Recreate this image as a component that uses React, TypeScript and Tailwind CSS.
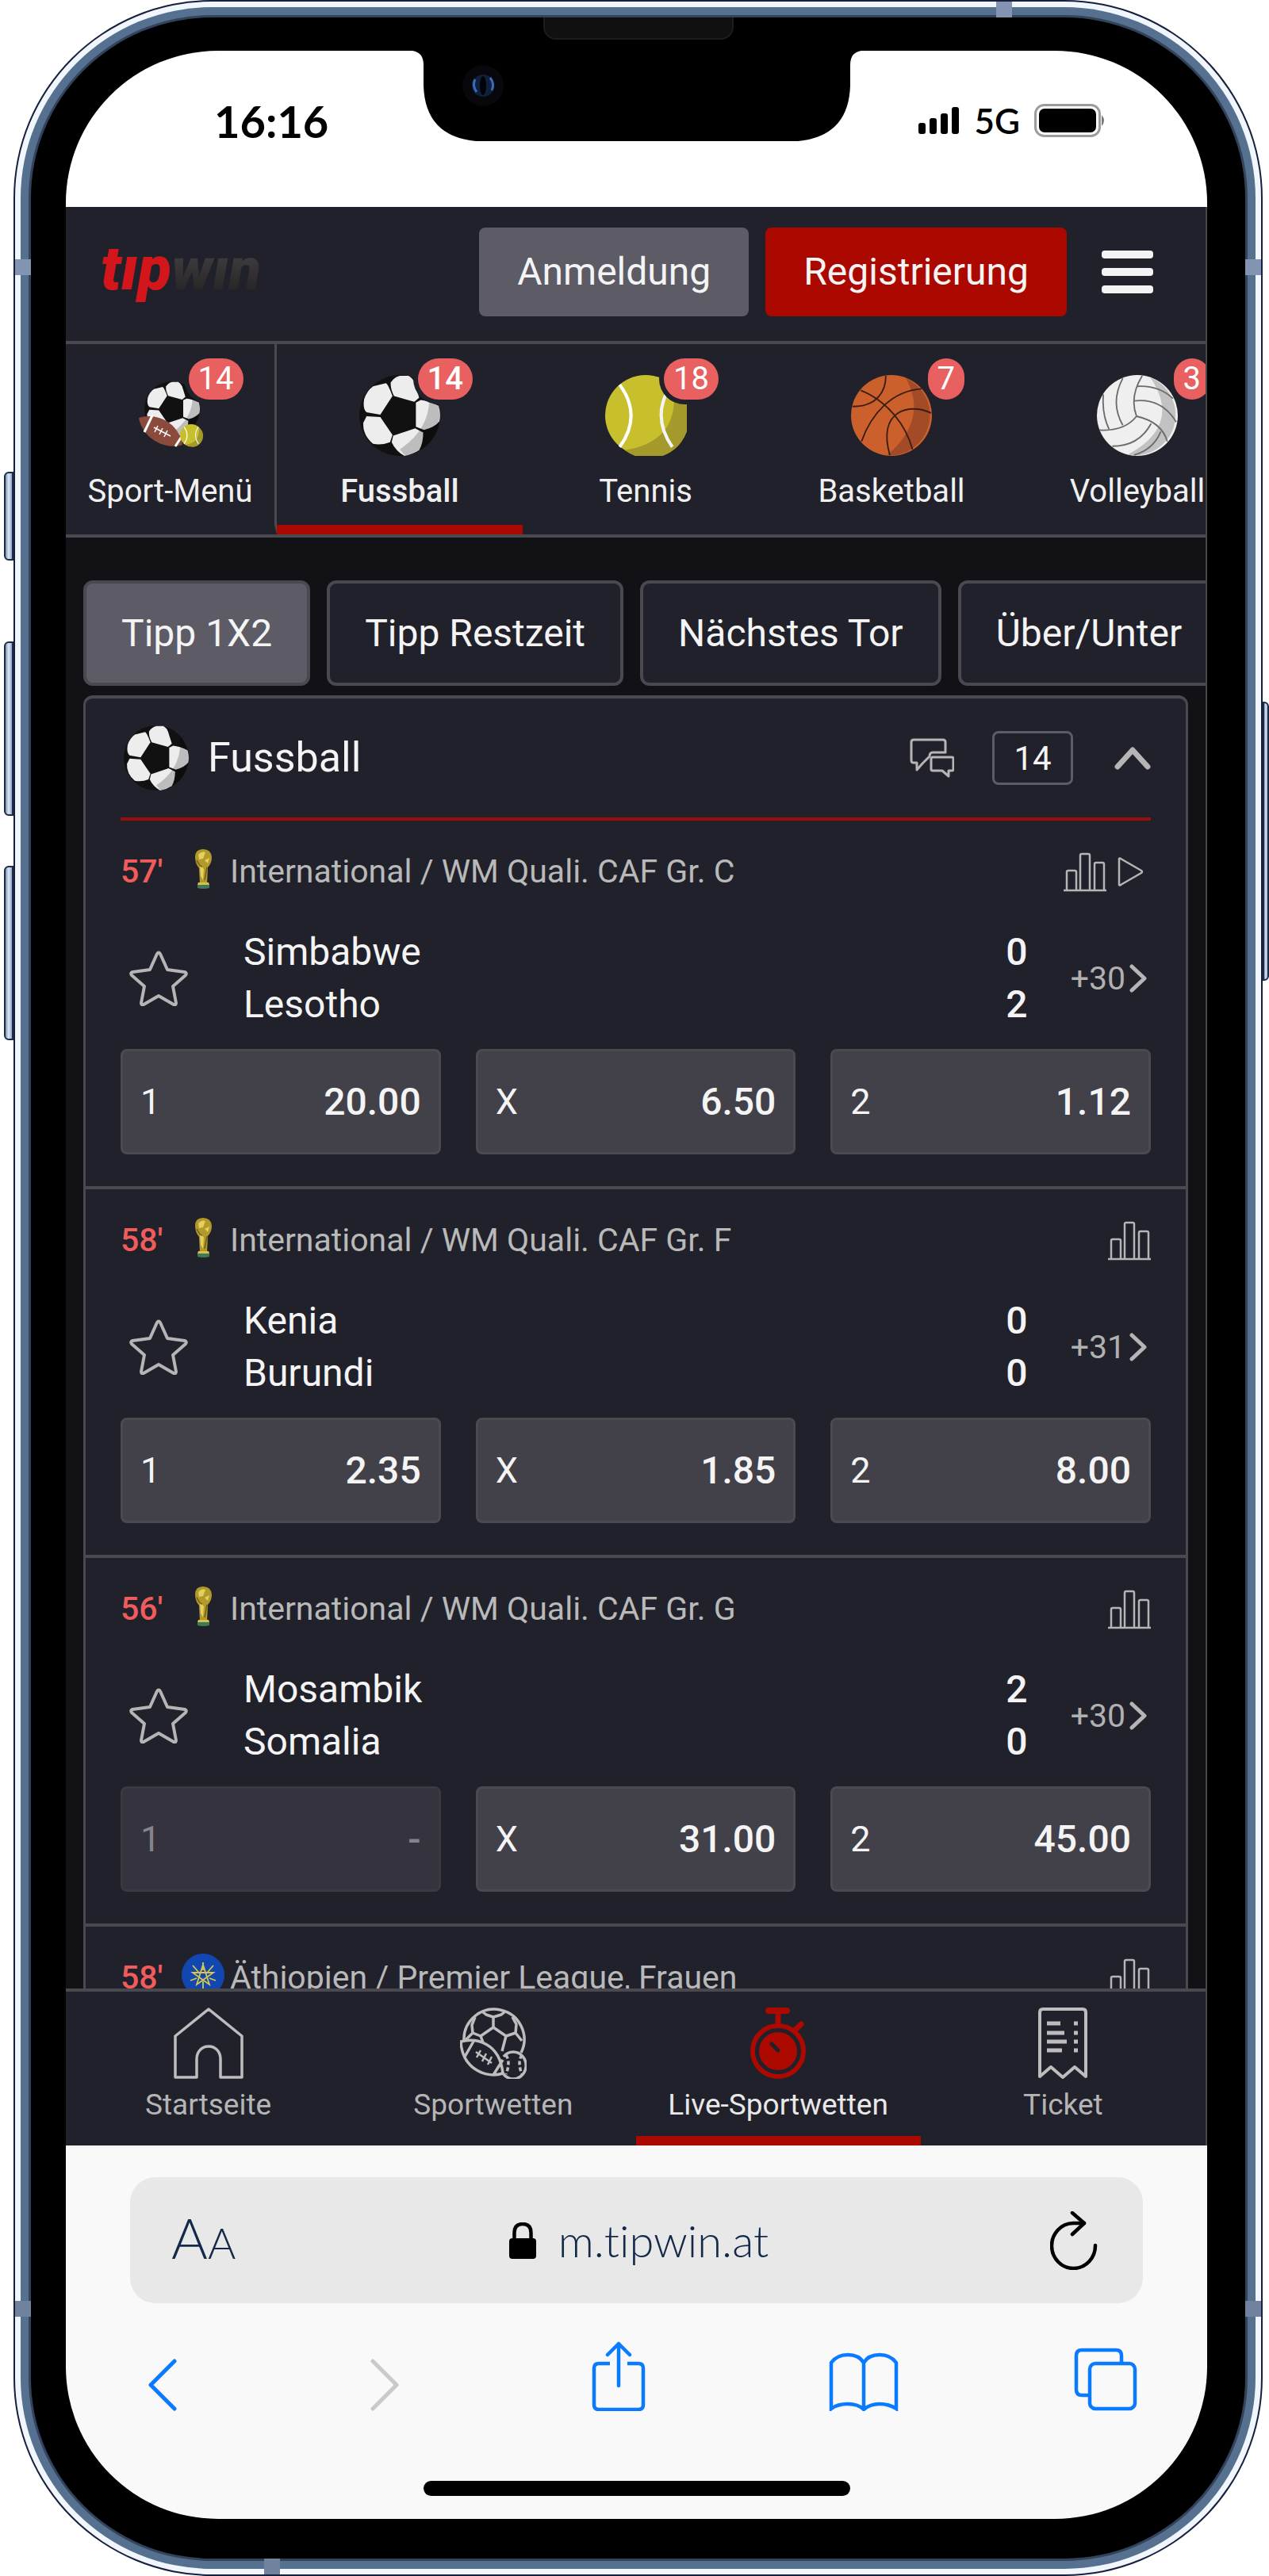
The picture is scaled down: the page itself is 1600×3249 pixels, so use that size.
import { useState, type ReactNode } from "react";
import { clsx } from "clsx";

interface IconProps {
  className?: string;
}

interface Sport {
  id: string;
  name: string;
  count: number;
  icon: (props: IconProps) => ReactNode;
}

interface Match {
  id: number;
  minute: string;
  league: string;
  badge: "cup" | "ethiopia";
  stream?: boolean;
  home: string;
  away: string;
  score: [number, number];
  more: number;
  odds: { label: string; value: string | null }[];
}

/* ---------- sport icons ---------- */

function SoccerShapes() {
  return (
    <>
      <circle cx="50" cy="50" r="50" fill="#111" />
      <g fill="#ededed">
        <path d="M6 30Q9 20 17 14L33 10Q36 12 41 26L26 49L9 46Q4 42 6 30Z" />
        <path d="M39 9Q43 3 50 1L61 1Q66 4 68 9L74 28L68 33L43 26Q38 16 39 9Z" />
        <path d="M76 31Q86 32 98 38Q101 48 99 57Q94 64 80 68L70 64V34Z" />
        <path d="M69 66L79 71Q79 84 74 93Q66 98 56 100Q45 94 40 83L42 75Z" />
        <path d="M9 51L26 52L41 74L38 83Q28 87 17 85Q4 74 5 59Z" />
      </g>
      <path d="M86 16Q92 64 50 92L57 100L74 93A50 50 0 0 0 86 16Z" fill="#000" opacity="0.2" />
    </>
  );
}

function TennisShapes() {
  return (
    <>
      <circle cx="50" cy="50" r="50" fill="#c8bf2d" />
      <path d="M84 13Q94 82 24 93A50 50 0 0 0 84 13Z" fill="#a39a2b" />
      <path d="M18 12Q46 50 18 89" fill="none" stroke="#fff" strokeWidth="4" />
      <path d="M82 12Q56 50 83 89" fill="none" stroke="#f4f4f4" strokeWidth="4" />
    </>
  );
}

function SoccerIcon({ className }: IconProps) {
  return (
    <svg viewBox="0 0 100 100" className={className} aria-hidden="true">
      <SoccerShapes />
    </svg>
  );
}

function TennisIcon({ className }: IconProps) {
  return (
    <svg viewBox="0 0 100 100" className={className} aria-hidden="true">
      <TennisShapes />
    </svg>
  );
}

function BasketballIcon({ className }: IconProps) {
  return (
    <svg viewBox="0 0 100 100" className={className} aria-hidden="true">
      <circle cx="50" cy="50" r="50" fill="#cb602d" />
      <path d="M68 4Q96 56 44 99.500A50 50 0 0 0 68 4Z" fill="#a34b26" />
      <g fill="none" stroke="#3a1d12" strokeWidth="1.800">
        <path d="M43 1C43 18 34 39 2 39" />
        <path d="M12 19C45 32 68 62 76 92" />
        <path d="M87 17C50 20 25 48 13 82" />
        <path d="M99 47C72 34 32 44 48 99" />
      </g>
    </svg>
  );
}

function VolleyballIcon({ className }: IconProps) {
  return (
    <svg viewBox="0 0 100 100" className={className} aria-hidden="true">
      <circle cx="50" cy="50" r="50" fill="#efefef" />
      <path d="M66 3Q106 62 38 98.500A50 50 0 0 0 66 3Z" fill="#c2c2c2" />
      <g fill="none" stroke="#6b6b6b" strokeWidth="1.800">
        <path d="M32 4Q16 34 32 62" />
        <path d="M56 1Q40 27 49 51Q34 70 3 68" />
        <path d="M8 24Q6 48 15 67" />
        <path d="M49 14Q76 12 94 29" />
        <path d="M46 32Q80 28 98 58" />
        <path d="M49 51Q80 58 87 82" />
        <path d="M67 60Q52 88 19 88" />
        <path d="M79 70Q70 92 46 99" />
      </g>
    </svg>
  );
}

function SportMenuIcon({ className }: IconProps) {
  return (
    <svg viewBox="-12 -8 104 102" className={className} aria-hidden="true">
      <g transform="translate(7 0) scale(0.7)">
        <SoccerShapes />
      </g>
      <path d="M0 46C20 39 50 50 55 80C36 87 5 74 0 46Z" fill="#8a4b3c" />
      <path d="M17 43L7 64M55 68L46 82" stroke="#fff" strokeWidth="3" />
      <path d="M19 58L40 69M24 56l-4 8M30 59l-4 8M36 62l-4 8" stroke="#fff" strokeWidth="1.500" />
      <g transform="translate(52 54) scale(0.28)">
        <TennisShapes />
      </g>
    </svg>
  );
}

/* ---------- match list icons ---------- */

function ChatIcon() {
  return (
    <svg viewBox="0 0 56 50" className="h-[50px] w-14" fill="none" stroke="#b5b5b5" strokeWidth="3" strokeLinejoin="round" aria-hidden="true">
      <path d="M25 23l-9 9-7 8v-9H5q-3 0-3-3V5q0-3 3-3h37q3 0 3 3v13H29q-4 0-4 5z" />
      <path d="M29 24h24q2 0 2 2v13q0 2-2 2h-4v7l-8-7H29q-2 0-2-2V26q0-2 2-2z" />
    </svg>
  );
}

function StatsIcon() {
  return (
    <svg viewBox="0 0 54 50" className="h-[50px] w-[54px]" fill="none" stroke="#b5b5b5" strokeWidth="2.500" aria-hidden="true">
      <path d="M0 48h54" />
      <path d="M4 48V25q0-2 2-2h8q2 0 2 2v23" />
      <path d="M21 48V4q0-2 2-2h8q2 0 2 2v44" />
      <path d="M39 48V15q0-2 2-2h8q2 0 2 2v33" />
    </svg>
  );
}

function PlayIcon() {
  return (
    <svg viewBox="0 0 42 38" className="h-[38px] w-[42px]" fill="none" stroke="#b5b5b5" strokeWidth="2.500" strokeLinejoin="round" aria-hidden="true">
      <path d="M2 2v33q1 1 2 0l26-15q2-1 0-3L4 2q-1-1-2 0z" />
    </svg>
  );
}

function StarIcon() {
  return (
    <svg viewBox="0 0 74 70" className="h-[70px] w-[74px]" fill="none" stroke="#b5b5b5" strokeWidth="4" strokeLinejoin="round" aria-hidden="true">
      <path d="M35 4q2-3 4 0l9 20 22 3q3 1 1 4L55 45l4 21q0 3-3 2L37 57 18 68q-3 1-3-2l4-21L3 31q-2-3 1-4l22-3z" />
    </svg>
  );
}

function CupIcon() {
  return (
    <svg viewBox="0 0 24 52" className="h-[52px] w-6" aria-hidden="true">
      <path d="M2 11Q2 1 12 1t11 10q0 8-5 13l-1 21H8L7 25Q2 19 2 11z" fill="#b3992b" />
      <path d="M6 8q4-5 9-3l-3 8-5 1zM14 15l6-3-2 7zM8 20l5 6-1 14-3-5z" fill="#e2d160" />
      <path d="M4 15q4 8 7 8M17 24l-3 16" stroke="#6f5d19" strokeWidth="1.500" fill="none" />
      <path d="M6 43h13l1 3H5z" fill="#d6c24a" />
      <path d="M5 46h15v4q-7 2-15 0z" fill="#3f7a54" />
    </svg>
  );
}

function EthiopiaIcon() {
  return (
    <svg viewBox="0 0 56 56" className="size-14" aria-hidden="true">
      <circle cx="28" cy="28" r="27" fill="#1147b0" />
      <g stroke="#d8c64a" strokeWidth="1.800" fill="none">
        <path d="M28 15l8 25-21-15h26L20 40z" />
        <path d="M28 22V12M34 24l7-8M36 32l8 3M28 36v12M20 32l-8 3M22 24l-7-8" />
      </g>
    </svg>
  );
}

/* ---------- bottom navigation icons ---------- */

function HomeIcon() {
  return (
    <svg viewBox="0 0 88 90" className="h-[90px] w-[88px]" fill="none" stroke="#bdbdbd" strokeWidth="3.500" strokeLinejoin="round" aria-hidden="true">
      <path d="M2 36L44 2l42 34v52H59V65c0-9-6-16-15-16s-15 7-15 16v23H2z" />
    </svg>
  );
}

function BallsIcon() {
  return (
    <svg viewBox="0 0 84 90" className="h-[90px] w-[84px]" fill="none" stroke="#bdbdbd" strokeWidth="3.500" strokeLinejoin="round" aria-hidden="true">
      <path d="M5 42A38 38 0 1 1 77 57" />
      <path d="M28 5l5 4 9 3 10-3 5-4M42 12v13L26 36l-10-4-1-10 4-10M42 25l16 11 12-4 1-11-5-9M58 36l-5 19M26 36l3 8M16 32L7 41M70 32l8 10" />
      <path d="M1 43C20 38 50 44 54 83C34 90 3 78 1 43zM18 41L6 62M54 66L42 85" />
      <path d="M20 56l20 14M26 54l-5 9M33 58l-5 10M40 62l-5 10" strokeWidth="2.500" />
      <path d="M55 62a16 17 0 1 1-2 19" />
      <path d="M58 60q6 9 0 24M78 60q-6 9 0 24" strokeDasharray="5 3" />
    </svg>
  );
}

function StopwatchIcon() {
  return (
    <svg viewBox="0 0 72 90" className="h-[90px] w-[72px]" fill="none" stroke="#ac0900" aria-hidden="true">
      <path d="M24 4h23" strokeWidth="8" strokeLinecap="round" />
      <path d="M36 6v16" strokeWidth="7" />
      <path d="M57 29l8-8" strokeWidth="7" strokeLinecap="round" />
      <circle cx="36" cy="55" r="32" strokeWidth="6" />
      <circle cx="36" cy="55" r="24" fill="#ac0900" stroke="none" />
      <path d="M28 46l8 8" stroke="#21212b" strokeWidth="5" strokeLinecap="round" />
    </svg>
  );
}

function TicketIcon() {
  return (
    <svg viewBox="0 0 62 90" className="h-[90px] w-[62px]" fill="none" stroke="#bdbdbd" strokeWidth="4" strokeLinejoin="round" aria-hidden="true">
      <path d="M2 87V6q0-4 4-4h50q4 0 4 4v81L46 75 31 88 16 75z" />
      <path d="M11 20h17M11 32h22M11 43h25M11 54h19" strokeWidth="5" />
      <path d="M45 20h5M45 32h5M45 43h5M45 54h5" strokeWidth="5" />
    </svg>
  );
}

/* ---------- data ---------- */

const SPORTS: Sport[] = [
  { id: "football", name: "Fussball", count: 14, icon: SoccerIcon },
  { id: "tennis", name: "Tennis", count: 18, icon: TennisIcon },
  { id: "basketball", name: "Basketball", count: 7, icon: BasketballIcon },
  { id: "volleyball", name: "Volleyball", count: 3, icon: VolleyballIcon },
];

const MARKETS = ["Tipp 1X2", "Tipp Restzeit", "Nächstes Tor", "Über/Unter"];

const MATCHES: Match[] = [
  {
    id: 1,
    minute: "57'",
    league: "International / WM Quali. CAF Gr. C",
    badge: "cup",
    stream: true,
    home: "Simbabwe",
    away: "Lesotho",
    score: [0, 2],
    more: 30,
    odds: [
      { label: "1", value: "20.00" },
      { label: "X", value: "6.50" },
      { label: "2", value: "1.12" },
    ],
  },
  {
    id: 2,
    minute: "58'",
    league: "International / WM Quali. CAF Gr. F",
    badge: "cup",
    home: "Kenia",
    away: "Burundi",
    score: [0, 0],
    more: 31,
    odds: [
      { label: "1", value: "2.35" },
      { label: "X", value: "1.85" },
      { label: "2", value: "8.00" },
    ],
  },
  {
    id: 3,
    minute: "56'",
    league: "International / WM Quali. CAF Gr. G",
    badge: "cup",
    home: "Mosambik",
    away: "Somalia",
    score: [2, 0],
    more: 30,
    odds: [
      { label: "1", value: null },
      { label: "X", value: "31.00" },
      { label: "2", value: "45.00" },
    ],
  },
];

const NAV = [
  { id: "home", label: "Startseite", icon: HomeIcon },
  { id: "sports", label: "Sportwetten", icon: BallsIcon },
  { id: "live", label: "Live-Sportwetten", icon: StopwatchIcon },
  { id: "ticket", label: "Ticket", icon: TicketIcon },
];

/* ---------- sections ---------- */

function StatusBar() {
  return (
    <div className="relative flex h-[197px] shrink-0 items-start justify-between bg-white pl-[187px] pr-[128px] pt-[59px] font-['Lato',sans-serif] text-black">
      <span className="text-[56px] font-bold leading-[60px]">16:16</span>
      <svg viewBox="0 0 566 114" className="absolute left-1/2 top-0 h-[114px] w-[566px] -translate-x-1/2" aria-hidden="true">
        <path d="M0 0Q14 2 14 18V44Q16 108 80 114H486Q550 108 552 44V18Q552 2 566 0Z" fill="#000" />
        <circle cx="89" cy="44" r="26" fill="#07070c" />
        <circle cx="89" cy="44" r="14" fill="#10203a" />
        <path d="M79 36q-4 8 2 16M98 34q6 8 2 16" stroke="#3a6bb8" strokeWidth="3" fill="none" />
        <ellipse cx="89" cy="44" rx="4" ry="12" fill="#020308" />
      </svg>
      <div className="flex items-center gap-[18px] pt-1">
        <svg viewBox="0 0 52 34" className="h-[34px] w-[52px]" aria-hidden="true">
          <rect x="0" y="20" width="9" height="14" rx="3" />
          <rect x="14" y="14" width="9" height="20" rx="3" />
          <rect x="28" y="8" width="9" height="26" rx="3" />
          <rect x="42" y="0" width="9" height="34" rx="3" />
        </svg>
        <span className="text-[44px] font-semibold leading-[50px]">5G</span>
        <svg viewBox="0 0 90 42" className="h-[42px] w-[90px]" aria-hidden="true">
          <rect x="1.500" y="1.500" width="81" height="39" rx="11" fill="none" stroke="#9c9c9c" strokeWidth="3" />
          <rect x="6" y="6" width="72" height="30" rx="7" />
          <path d="M85 14q6 7 0 14z" fill="#777" />
        </svg>
      </div>
    </div>
  );
}

function SiteHeader() {
  return (
    <header className="flex shrink-0 items-center border-b-4 border-[#4a494f] bg-[#21212b] pb-[31px] pl-11 pr-[66px] pt-[26px]">
      <a href="#" aria-label="tipwin" className="flex items-baseline pb-2 leading-[80px]">
        <span className="text-[77px] font-black italic text-[#d3161b]">tıp</span>
        <span className="bg-gradient-to-b from-[#48484b] to-[#231f20] bg-clip-text pr-2 text-[74px] font-black italic text-transparent">wın</span>
      </a>
      <div className="ml-auto flex items-center">
        <button className="h-28 rounded-lg bg-[#5c5b66] px-12 text-[48px] text-[#f4f4f4]">Anmeldung</button>
        <button className="ml-[21px] h-28 rounded-lg bg-[#ab0900] px-12 text-[48px] text-[#f4f4f4]">Registrierung</button>
        <button aria-label="Menü" className="ml-11 flex w-[65px] flex-col gap-3">
          <span className="h-2.5 rounded-sm bg-[#f4f4f4]" />
          <span className="h-2.5 rounded-sm bg-[#f4f4f4]" />
          <span className="h-2.5 rounded-sm bg-[#f4f4f4]" />
        </button>
      </div>
    </header>
  );
}

interface SportTabProps {
  name: string;
  count: number;
  icon: Sport["icon"];
  active?: boolean;
  className?: string;
  onSelect?: () => void;
}

function SportTab({ name, count, icon: Icon, active, className, onSelect }: SportTabProps) {
  return (
    <button
      onClick={onSelect}
      className={clsx(
        "flex h-60 shrink-0 flex-col items-center border-b-[12px] pt-[39px] text-[40px] leading-[48px] text-[#f0f0f0]",
        active ? "border-b-[#ab0900] font-medium" : "border-b-transparent",
        className,
      )}
    >
      <span className="relative block">
        <Icon className="h-[102px] w-[104px]" />
        <span className="absolute -right-10 -top-[21px] rounded-[28px] bg-[#e86060] px-3 py-0.5 text-white shadow-[0_0_0_6px_#21212b]">
          {count}
        </span>
      </span>
      <span className="mt-[21px]">{name}</span>
    </button>
  );
}

function OddButton({ label, value }: { label: string; value: string | null }) {
  return (
    <button
      disabled={value === null}
      className={clsx(
        "flex h-[133px] flex-1 items-center justify-between rounded-lg border-[3px] px-[22px]",
        value === null
          ? "border-[#3a3940] bg-[#35343e] text-[#85848a]"
          : "border-[#4b4a4f] bg-[#42414a] text-[#f4f4f4]",
      )}
    >
      <span className="text-[45px]">{label}</span>
      <span className="text-[48px] font-medium">{value ?? "-"}</span>
    </button>
  );
}

function MatchHeader({ minute, league, badge, stream }: Pick<Match, "minute" | "league" | "badge" | "stream">) {
  return (
    <div className="flex h-14 items-center text-[41px] text-[#b9b9b9]">
      <span className="w-[76px] font-medium text-[#f05c5c]">{minute}</span>
      <span className="flex w-14 justify-center pb-2">{badge === "cup" ? <CupIcon /> : <EthiopiaIcon />}</span>
      <span className="ml-1.5 flex-1 whitespace-nowrap">{league}</span>
      <StatsIcon />
      {stream ? (
        <span className="ml-3.5">
          <PlayIcon />
        </span>
      ) : null}
    </div>
  );
}

function MatchRow({ match }: { match: Match }) {
  return (
    <li className="border-b-4 border-[#4a494f] px-11 pb-10 pt-[37px]">
      <MatchHeader {...match} />
      <div className="mt-10 flex items-center pl-[11px] pr-1 text-[48px] leading-[66px] text-[#f4f4f4]">
        <button aria-label={`${match.home} – ${match.away} merken`}>
          <StarIcon />
        </button>
        <div className="ml-[70px] flex-1">
          <div>{match.home}</div>
          <div>{match.away}</div>
        </div>
        <div className="mr-[54px] text-center font-medium">
          <div>{match.score[0]}</div>
          <div>{match.score[1]}</div>
        </div>
        <a href="#" className="flex items-center gap-1 text-[41px] text-[#b0b0b0]">
          +{match.more}
          <svg viewBox="0 0 24 36" className="h-9 w-6" fill="none" stroke="#b5b5b5" strokeWidth="5" strokeLinecap="round" strokeLinejoin="round" aria-hidden="true">
            <path d="M4 3l16 15L4 33" />
          </svg>
        </a>
      </div>
      <div className="mt-[23px] flex gap-11">
        {match.odds.map((odd) => (
          <OddButton key={odd.label} {...odd} />
        ))}
      </div>
    </li>
  );
}

function MatchList() {
  return (
    <section className="mx-[22px] mt-3 rounded-t-xl border-[3px] border-t-4 border-[#4a494f] bg-[#21212b]">
      <div className="mx-11 flex h-[154px] items-center border-b-4 border-[#9c0d0d]">
        <SoccerIcon className="ml-1 size-[82px]" />
        <h2 className="ml-6 flex-1 text-[52px] text-[#f4f4f4]">Fussball</h2>
        <ChatIcon />
        <span className="ml-12 flex h-[68px] w-[102px] items-center justify-center rounded-lg border-[3px] border-[#5c5b66] text-[42px] text-[#f4f4f4]">
          14
        </span>
        <button aria-label="Zuklappen" className="ml-[52px]">
          <svg viewBox="0 0 46 32" className="h-8 w-[46px]" fill="none" stroke="#b5b5b5" strokeWidth="7" strokeLinecap="round" strokeLinejoin="round" aria-hidden="true">
            <path d="M4 27L23 6l19 21" />
          </svg>
        </button>
      </div>
      <ul>
        {MATCHES.map((match) => (
          <MatchRow key={match.id} match={match} />
        ))}
        <li className="px-11 pb-10 pt-[37px]">
          <MatchHeader minute="58'" league="Äthiopien / Premier League, Frauen" badge="ethiopia" />
        </li>
      </ul>
    </section>
  );
}

function BottomNav() {
  return (
    <nav className="flex shrink-0 border-t-4 border-[#4a494f] bg-[#21212b]">
      {NAV.map(({ id, label, icon: Icon }) => (
        <a
          key={id}
          href={`#${id}`}
          className={clsx(
            "flex flex-1 basis-0 flex-col items-center border-b-[12px] pb-[17px] pt-5 text-[37px] leading-[44px]",
            id === "live" ? "border-[#ab0900] text-[#e8e8e8]" : "border-transparent text-[#b5b5b5]",
          )}
        >
          <Icon />
          <span className="mt-[11px] whitespace-nowrap">{label}</span>
        </a>
      ))}
    </nav>
  );
}

function SafariBar() {
  return (
    <footer className="shrink-0 bg-[#f9f9f9] pb-[29px] pt-10 font-['Lato',sans-serif]">
      <div className="mx-[81px] flex h-[159px] items-center justify-between rounded-[32px] bg-[#e8e8e8] pl-[52px] pr-[57px] text-[#14294a]">
        <button aria-label="Seitenansicht" className="text-[70px] font-light leading-[80px]">
          A<span className="text-[54px]">A</span>
        </button>
        <label className="flex items-center gap-7">
          <svg viewBox="0 0 34 46" className="h-[46px] w-[34px]" aria-hidden="true">
            <rect x="0" y="20" width="34" height="26" rx="4" />
            <path d="M6.500 22V13q0-11 10.500-11t10.500 11v9" fill="none" stroke="#000" strokeWidth="4.500" />
          </svg>
          <input
            aria-label="Adresse"
            defaultValue="m.tipwin.at"
            className="w-[276px] bg-transparent text-[56px] font-light leading-[64px] outline-none [font-variant-ligatures:none]"
          />
        </label>
        <button aria-label="Neu laden">
          <svg viewBox="0 0 60 74" className="h-[74px] w-[60px]" fill="none" stroke="#000" strokeWidth="4.500" strokeLinecap="round" strokeLinejoin="round" aria-hidden="true">
            <path d="M57 43A27.500 28.500 0 1 1 29 15h14" />
            <path d="M28 2l15 13-15 14" />
          </svg>
        </button>
      </div>
      <div className="ml-[104px] mr-[88px] mt-12 grid h-[88px] grid-cols-[280fr_278fr_299fr_308fr_80fr] items-end justify-items-start">
        <button aria-label="Zurück">
          <svg viewBox="0 0 36 66" className="h-[66px] w-9" fill="none" stroke="#0a7aff" strokeWidth="5" strokeLinecap="round" strokeLinejoin="round" aria-hidden="true">
            <path d="M33 3L3 33l30 30" />
          </svg>
        </button>
        <button aria-label="Vorwärts" disabled>
          <svg viewBox="0 0 36 66" className="h-[66px] w-9" fill="none" stroke="#c9c9c9" strokeWidth="5" strokeLinecap="round" strokeLinejoin="round" aria-hidden="true">
            <path d="M3 3l30 30L3 63" />
          </svg>
        </button>
        <button aria-label="Teilen">
          <svg viewBox="0 0 68 88" className="h-[88px] w-[68px]" fill="none" stroke="#0a7aff" strokeWidth="4.500" strokeLinejoin="round" aria-hidden="true">
            <path d="M23 28H9q-6 0-6 6v46q0 6 6 6h50q6 0 6-6V34q0-6-6-6H45" />
            <path d="M34 56V3M20 17L34 3l14 14" strokeLinecap="round" />
          </svg>
        </button>
        <button aria-label="Lesezeichen">
          <svg viewBox="0 0 88 74" className="h-[74px] w-[88px]" fill="none" stroke="#0a7aff" strokeWidth="4.500" aria-hidden="true">
            <path d="M44 13Q38 3 24 3T3 13v58q8-6 21-6t20 7q8-7 20-7t21 6V13Q78 3 64 3T44 13zV72" />
          </svg>
        </button>
        <button aria-label="Tabs">
          <svg viewBox="0 0 80 80" className="size-20" fill="none" stroke="#0a7aff" strokeWidth="4.500" aria-hidden="true">
            <rect x="20" y="20" width="57" height="57" rx="7" />
            <path d="M20 60H10q-7 0-7-7V10q0-7 7-7h43q7 0 7 7v10" />
          </svg>
        </button>
      </div>
      <div className="mx-auto mt-[88px] h-[19px] w-[538px] rounded-full bg-black" />
    </footer>
  );
}

function SideKey({ className }: IconProps) {
  return (
    <div
      className={clsx(
        "border-2 border-[#1d2b49] bg-gradient-to-r from-[#7f96b4] via-[#dfe9f7] to-[#8fa6c4]",
        className,
      )}
    />
  );
}

export default function App() {
  const [sport, setSport] = useState("football");
  const [market, setMarket] = useState(MARKETS[0]);

  return (
    <div className="flex h-screen overflow-hidden bg-white font-['Roboto',sans-serif]">
      <div className="flex w-[17px] shrink-0 flex-col items-end pt-[595px]">
        <SideKey className="h-[112px] w-3 rounded-l-md" />
        <SideKey className="mt-[102px] h-[220px] w-3 rounded-l-md" />
        <SideKey className="mt-[63px] h-[220px] w-3 rounded-l-md" />
      </div>

      {/* metal rim: dark edge, highlight, blue band, then the black bezel */}
      <div className="relative min-w-0 flex-1 rounded-[250px] bg-[#16203c] p-0.5">
        <div className="h-full rounded-[248px] bg-[#f1f5fc] p-[7px]">
          <div className="h-full rounded-[241px] bg-[#56708f] p-2.5">
            <div className="h-full rounded-[231px] bg-[#33435c] p-[3px]">
              <div className="relative h-full rounded-[228px] bg-black pb-[50px] pl-11 pr-12 pt-[42px]">
                <div className="absolute left-1/2 top-0 h-7 w-60 -translate-x-1/2 rounded-b-2xl border-2 border-t-0 border-[#1d1d1d] bg-[#101010]" />

                <div className="flex h-full flex-col overflow-hidden rounded-[192px]">
                  <StatusBar />

                  <div className="flex min-h-0 flex-1 flex-col border-r-2 border-[#46454b] bg-[#121116]">
                    <SiteHeader />

                    <div className="flex shrink-0 overflow-hidden border-b-4 border-[#4a494f] bg-[#21212b]">
                      <SportTab name="Sport-Menü" count={14} icon={SportMenuIcon} className="w-[266px] border-r-[3px] border-r-[#4a494f]" />
                      {SPORTS.map((s) => (
                        <SportTab
                          key={s.id}
                          name={s.name}
                          count={s.count}
                          icon={s.icon}
                          active={s.id === sport}
                          className="w-[310px]"
                          onSelect={() => setSport(s.id)}
                        />
                      ))}
                    </div>

                    <main className="min-h-0 flex-1 overflow-x-hidden overflow-y-auto [scrollbar-width:none]">
                      <div className="flex gap-[21px] overflow-hidden pl-[22px] pt-[54px]">
                        {MARKETS.map((m) => (
                          <button
                            key={m}
                            onClick={() => setMarket(m)}
                            className={clsx(
                              "h-[133px] shrink-0 rounded-xl border-4 border-[#4a494f] px-11 text-[48px] text-[#f4f4f4]",
                              m === market ? "bg-[#5c5b66]" : "bg-[#21212b]",
                            )}
                          >
                            {m}
                          </button>
                        ))}
                      </div>
                      <MatchList />
                    </main>

                    <BottomNav />
                  </div>

                  <SafariBar />
                </div>
              </div>
            </div>
          </div>
        </div>

        {/* antenna bands */}
        <span className="absolute left-0.5 top-[327px] h-5 w-5 bg-[#8394b3]" />
        <span className="absolute right-0.5 top-[327px] h-5 w-5 bg-[#8394b3]" />
        <span className="absolute bottom-[327px] left-0.5 h-5 w-5 bg-[#71829f]" />
        <span className="absolute bottom-[327px] right-0.5 h-5 w-5 bg-[#71829f]" />
        <span className="absolute right-[316px] top-0.5 h-5 w-5 bg-[#8394b3]" />
        <span className="absolute bottom-0.5 left-[316px] h-5 w-5 bg-[#71829f]" />
      </div>

      <div className="w-2 shrink-0 pt-[885px]">
        <SideKey className="h-[352px] w-2 rounded-r-md" />
      </div>
    </div>
  );
}
